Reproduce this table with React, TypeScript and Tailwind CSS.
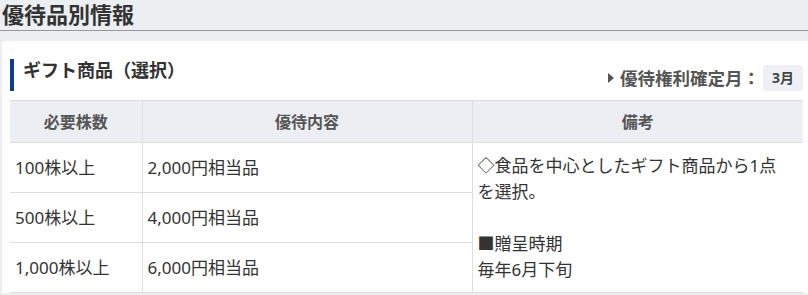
const rows = [
  { shares: "100株以上", content: "2,000円相当品" },
  { shares: "500株以上", content: "4,000円相当品" },
  { shares: "1,000株以上", content: "6,000円相当品" },
];

export default function App() {
  return (
    <div
      className="h-[295px] w-[808px] overflow-hidden bg-[#eceff2] text-[#333]"
      style={{ fontFamily: '"Noto Sans", "Noto Sans CJK JP", sans-serif' }}
    >
      <div className="h-[31px] border-b border-[#999]">
        <h1 className="pl-[2px] text-[22px] font-bold leading-[28px] text-[#333]">優待品別情報</h1>
      </div>

      <div className="ml-[2px] mt-[10px] rounded-tl-[4px] bg-white pl-2 pr-[5px] pt-[18px]">
        <div className="flex items-center justify-between">
          <h2 className="h-8 border-l-4 border-[#0d3d91] pl-[9px] text-[18px] font-bold leading-[23px] text-[#333]">
            ギフト商品（選択）
          </h2>
          <div className="flex items-center pt-[6px]">
            <svg width="6" height="10" viewBox="0 0 6 10" className="mr-[6px]">
              <path d="M0 0 L6 5 L0 10 Z" fill="#555" />
            </svg>
            <span className="text-[17.5px] font-bold text-[#555]">優待権利確定月：</span>
            <span className="ml-[3px] rounded-[4px] bg-[#eef0f5] px-[9px] text-[14px] font-bold leading-[26px] text-[#444]">
              3月
            </span>
          </div>
        </div>

        <table className="mt-[9px] w-full border-collapse border-t border-[#ddd] text-[17px]">
          <thead>
            <tr className="h-[42px] border-b border-[#ddd] bg-[#eceef4] text-[16px] font-bold text-[#555]">
              <th className="w-[132px] text-center">必要株数</th>
              <th className="w-[330px] border-l border-[#ddd] text-center">優待内容</th>
              <th className="border-l border-[#ddd] text-center">備考</th>
            </tr>
          </thead>
          <tbody>
            {rows.map((row, i) => (
              <tr key={row.shares} className="h-[50px] border-b border-[#ddd]">
                <td className="px-[5px]">{row.shares}</td>
                <td className="border-l border-[#ddd] px-[5px]">{row.content}</td>
                {i === 0 && (
                  <td
                    rowSpan={3}
                    className="border-l border-[#ddd] pl-[5px] pr-[12px] pt-[10px] align-top leading-[26px]"
                  >
                    ◇食品を中心としたギフト商品から1点を選択。
                    <br />
                    <br />
                    ■贈呈時期
                    <br />
                    毎年6月下旬
                  </td>
                )}
              </tr>
            ))}
          </tbody>
        </table>
      </div>
    </div>
  );
}
